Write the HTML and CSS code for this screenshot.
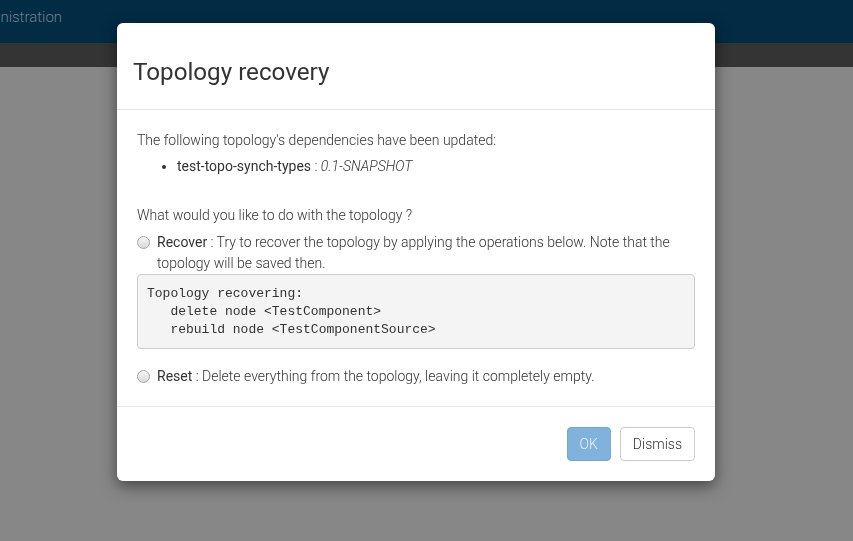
FILE: index.html
```html
<!DOCTYPE html>
<html>
<head>
<meta charset="utf-8">
<link rel="stylesheet" href="styles.css">
</head>
<body>
<div class="page">
  <div class="navbar"><span class="brand">Administration</span></div>
  <div class="subbar"></div>
  <div class="content"></div>
</div>
<div class="backdrop">
  <div class="modal">
    <div class="modal-header"><h4 class="modal-title">Topology recovery</h4></div>
    <div class="modal-body">
      <p class="intro">The following topology's dependencies have been updated:</p>
      <ul class="deps">
        <li><strong>test-topo-synch-types</strong> : <em>0.1-SNAPSHOT</em></li>
      </ul>
      <p class="question">What would you like to do with the topology ?</p>
      <div class="option">
        <span class="radio"></span>
        <div class="option-text"><strong>Recover</strong> : Try to recover the topology by applying the operations below. Note that the topology will be saved then.</div>
      </div>
      <pre class="ops">Topology recovering:
   delete node &lt;TestComponent&gt;
   rebuild node &lt;TestComponentSource&gt;</pre>
      <div class="option">
        <span class="radio"></span>
        <div class="option-text"><strong>Reset</strong> : Delete everything from the topology, leaving it completely empty.</div>
      </div>
    </div>
    <div class="modal-footer">
      <button class="btn btn-primary">OK</button>
      <button class="btn btn-default">Dismiss</button>
    </div>
  </div>
</div>
</body>
</html>
```
FILE: styles.css
```css
* { box-sizing: border-box; }
html, body { margin: 0; padding: 0; height: 100%; }
body {
  font-family: Roboto, "Liberation Sans", sans-serif;
  font-size: 14px;
  color: #333;
  background: #878787;
  overflow: hidden;
}
.page { height: 100%; display: flex; flex-direction: column; }
.navbar {
  height: 43px;
  background: #022b44;
  display: flex;
  align-items: center;
}
.brand {
  font-size: 15px;
  font-weight: 300;
  color: #6f8190;
  margin-left: -34px;
  margin-top: -9px;
}
.subbar { height: 24px; background: #343434; }
.content { flex: 1; background: #878787; }

.backdrop {
  position: fixed;
  inset: 0;
  display: flex;
  justify-content: flex-start;
  align-items: flex-start;
  padding: 23px 0 0 117px;
}
.modal {
  width: 598px;
  background: #fff;
  border-radius: 6px;
  box-shadow: 0 5px 15px rgba(0,0,0,.5);
}
.modal-header {
  padding: 35px 16px 22px;
  border-bottom: 1px solid #e5e5e5;
}
.modal-title {
  margin: 0;
  font-size: 24.2px;
  font-weight: 400;
  line-height: 29px;
  color: #333;
}
.modal-body {
  padding: 20px 20px 19px;
  font-weight: 300;
  line-height: 21px;
}
.modal-body strong { font-weight: 400; }
.modal-body em { font-style: italic; }
.intro { margin: 0 0 5px; }
.deps { margin: 0 0 28px; padding-left: 40px; }
.question { margin: 0 0 6px; }
.option { display: flex; gap: 7px; align-items: flex-start; }
.radio {
  flex: none;
  width: 13px;
  height: 13px;
  margin-top: 4px;
  border-radius: 50%;
  border: 1px solid #a6a6a6;
  background: linear-gradient(#f6f6f6, #d9d9d9);
}
.option-text { flex: 1; }
.ops {
  margin: 0 0 17px;
  padding: 10px 9px 9px;
  background: #f4f4f4;
  border: 1px solid #ccc;
  border-radius: 4px;
  font-family: "Liberation Mono", monospace;
  font-size: 13px;
  line-height: 18px;
  color: #333;
  font-weight: 400;
}
.modal-footer {
  border-top: 1px solid #e5e5e5;
  padding: 20px 20px 20px;
  display: flex;
  justify-content: flex-end;
  gap: 9px;
}
.btn {
  font-family: Roboto, "Liberation Sans", sans-serif;
  font-size: 14px;
  font-weight: 300;
  height: 34px;
  padding: 0 12px;
  border-radius: 4px;
  border: 1px solid transparent;
  line-height: 32px;
}
.btn-primary {
  background: #80b2db;
  border-color: #75a7d2;
  color: #e9f1f8;
}
.btn-default {
  background: #fff;
  border-color: #ccc;
  color: #333;
}
```
